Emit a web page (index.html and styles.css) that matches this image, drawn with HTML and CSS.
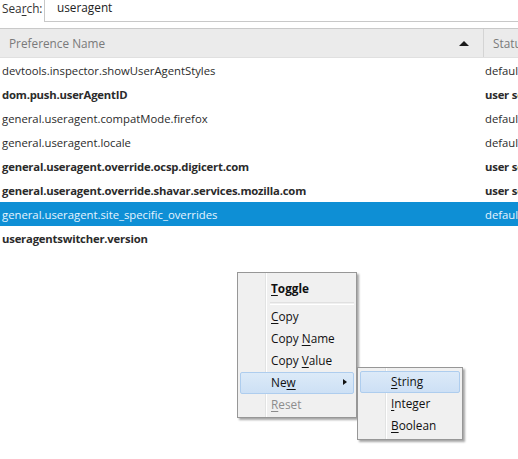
FILE: index.html
```html
<!DOCTYPE html>
<html>
<head>
<meta charset="utf-8">
<link rel="stylesheet" href="styles.css">
</head>
<body>
<div class="page">
  <div class="search">
    <span class="search-label">Sea<u>r</u>ch:</span>
    <div class="search-input">useragent</div>
  </div>
  <div class="table">
    <div class="head">
      <div class="col-name">Preference Name<span class="sort"></span></div>
      <div class="col-status">Status</div>
    </div>
    <div class="row"><div class="col-name">devtools.inspector.showUserAgentStyles</div><div class="col-status">default</div></div>
    <div class="row bold"><div class="col-name">dom.push.userAgentID</div><div class="col-status">user set</div></div>
    <div class="row"><div class="col-name">general.useragent.compatMode.firefox</div><div class="col-status">default</div></div>
    <div class="row"><div class="col-name">general.useragent.locale</div><div class="col-status">default</div></div>
    <div class="row bold"><div class="col-name">general.useragent.override.ocsp.digicert.com</div><div class="col-status">user set</div></div>
    <div class="row bold"><div class="col-name">general.useragent.override.shavar.services.mozilla.com</div><div class="col-status">user set</div></div>
    <div class="row selected"><div class="col-name">general.useragent.site_specific_overrides</div><div class="col-status">default</div></div>
    <div class="row bold"><div class="col-name">useragentswitcher.version</div><div class="col-status"></div></div>
  </div>

  <div class="menu main-menu">
    <div class="item strong"><u>T</u>oggle</div>
    <div class="sep"></div>
    <div class="item"><u>C</u>opy</div>
    <div class="item">Copy <u>N</u>ame</div>
    <div class="item">Copy <u>V</u>alue</div>
    <div class="item hot">Ne<u>w</u><span class="arrow"></span></div>
    <div class="item disabled"><u>R</u>eset</div>
  </div>
  <div class="menu sub-menu">
    <div class="item hot"><u>S</u>tring</div>
    <div class="item"><u>I</u>nteger</div>
    <div class="item"><u>B</u>oolean</div>
  </div>
</div>
</body>
</html>
```
FILE: styles.css
```css
html, body {
  margin: 0;
  padding: 0;
  background: #fff;
  overflow: hidden;
}
body {
  width: 518px;
  height: 459px;
  font-family: "Open Sans", "Noto Sans", sans-serif;
  font-size: 11.3px;
  color: #2b2b2b;
}
.page {
  position: relative;
  width: 518px;
  height: 459px;
  overflow: hidden;
}
.search {
  display: flex;
  height: 22px;
}
.search-label {
  width: 44px;
  padding-left: 2px;
  box-sizing: border-box;
  line-height: 14px;
  margin-top: 1px;
  color: #333;
  font-size: 11.8px;
}
.search-input {
  flex: 1;
  height: 30px;
  border: 1px solid #c8c8c8;
  border-right: none;
  border-top: none;
  box-sizing: border-box;
  padding-left: 12px;
  line-height: 14px;
  margin-top: -8px;
  padding-top: 8px;
  color: #222;
  font-size: 11.8px;
}
.table {
  margin-top: 6px;
  width: 580px;
}
.head {
  display: flex;
  height: 30px;
  background: #ebebeb;
  border-top: 1px solid #c9c9c9;
  border-bottom: 1px solid #e0e0e0;
  box-sizing: border-box;
  color: #7a7a7a;
  align-items: center;
  font-size: 11.8px;
}
.head .col-name {
  padding-left: 9px;
  position: relative;
  height: 100%;
  display: flex;
  align-items: center;
  border-right: 1px solid #d4d4d4;
  box-sizing: border-box;
}
.head .col-status {
  padding-left: 9px;
}
.sort {
  position: absolute;
  right: 14px;
  top: 12px;
  width: 0;
  height: 0;
  border-left: 5px solid transparent;
  border-right: 5px solid transparent;
  border-bottom: 5px solid #1a1a1a;
}
.col-name {
  width: 484px;
  flex: none;
  box-sizing: border-box;
  padding-left: 2px;
  white-space: nowrap;
}
.col-status {
  flex: 1;
  white-space: nowrap;
  padding-left: 1px;
}
.row {
  display: flex;
  height: 24px;
  align-items: center;
}
.row.bold {
  font-weight: 700;
  letter-spacing: -0.2px;
}
.row.selected {
  background: #0e8fd5;
  color: #e6f4ff;
}
.menu {
  position: absolute;
  background: #f0f0f0;
  border: 1px solid #979797;
  box-shadow: 2px 2px 2px rgba(0,0,0,0.35);
  box-sizing: border-box;
  padding: 5px 2px 1px;
  background-image: linear-gradient(to right, transparent 27px, #e2e3e3 27px, #e2e3e3 28px, #ffffff 28px, #ffffff 29px, transparent 29px);
  font-size: 11.8px;
}
.main-menu {
  left: 237px;
  top: 272px;
  width: 120px;
}
.sub-menu {
  left: 357px;
  top: 367px;
  width: 106px;
  padding-top: 3px;
  padding-bottom: 2px;
}
.item {
  position: relative;
  height: 22px;
  line-height: 19px;
  padding-left: 30px;
  color: #111;
  border: 1px solid transparent;
  box-sizing: border-box;
  border-radius: 2px;
}
.item.strong {
  font-weight: 700;
}
.item.hot {
  background: linear-gradient(#dceaf8, #cde0f5);
  border-color: #aecdee;
}
.item.disabled {
  color: #8d8d8d;
}
.sep {
  height: 1px;
  margin: 2px 0 1px 30px;
  border-top: 1px solid #e0e0e0;
  border-bottom: 1px solid #fff;
}
.arrow {
  position: absolute;
  right: 6px;
  top: 6px;
  width: 0;
  height: 0;
  border-top: 3.5px solid transparent;
  border-bottom: 3.5px solid transparent;
  border-left: 4px solid #111;
}
u {
  text-decoration: underline;
  text-underline-offset: 2px;
}
```
